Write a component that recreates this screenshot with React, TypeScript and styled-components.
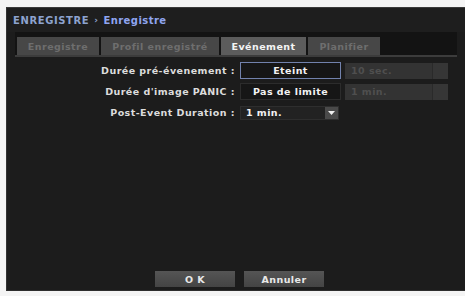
import { FC } from 'react'
import styled, { createGlobalStyle } from 'styled-components'

const GlobalStyle = createGlobalStyle`
  html, body {
    margin: 0;
    padding: 0;
    background: #f4f4f4;
  }
`

interface TabProps {
  active?: boolean
  width: number
}

interface FieldProps {
  focused?: boolean
}

const tabs = [
  { label: 'Enregistre', width: 82 },
  { label: 'Profil enregistré', width: 118 },
  { label: 'Evénement', width: 85, active: true },
  { label: 'Planifier', width: 72 },
]

const ArrowIcon: FC = () => (
  <svg width="7" height="4" viewBox="0 0 7 4">
    <path d="M0 0 L7 0 L3.5 4 Z" fill="#f0f0f0" />
  </svg>
)

const App: FC = () => {
  return (
    <Page>
      <GlobalStyle />
      <Panel>
        <TitleBar>
          <Crumb>ENREGISTRE</Crumb>
          <Sep>›</Sep>
          <Current>Enregistre</Current>
        </TitleBar>
        <TabStrip>
          {tabs.map(t => (
            <Tab key={t.label} active={t.active} width={t.width}>
              {t.label}
            </Tab>
          ))}
        </TabStrip>
        <Content>
          <Row>
            <Label>Durée pré-évenement :</Label>
            <Field focused>Eteint</Field>
            <Disabled>
              <span>10 sec.</span>
              <Stub />
            </Disabled>
          </Row>
          <Row>
            <Label>Durée d'image PANIC :</Label>
            <Field>Pas de limite</Field>
            <Disabled>
              <span>1 min.</span>
              <Stub />
            </Disabled>
          </Row>
          <Row>
            <Label>Post-Event Duration :</Label>
            <Select>
              <span>1 min.</span>
              <ArrowBox>
                <ArrowIcon />
              </ArrowBox>
            </Select>
          </Row>
        </Content>
        <Footer>
          <Button>O K</Button>
          <Button>Annuler</Button>
        </Footer>
      </Panel>
    </Page>
  )
}

const Page = styled.div`
  width: 465px;
  height: 296px;
  box-sizing: border-box;
  padding: 7px 0 5px 6px;
  font-family: 'DejaVu Sans', Verdana, sans-serif;
  font-weight: bold;
  font-size: 10px;
  letter-spacing: 0.45px;
`

const Panel = styled.div`
  height: 100%;
  display: flex;
  flex-direction: column;
  background: #1c1c1c;
  border-top: 1px solid #3a3a3a;
  border-left: 1px solid #333;
  box-sizing: border-box;
`

const TitleBar = styled.div`
  height: 24px;
  display: flex;
  align-items: center;
  padding-left: 6px;
  gap: 5px;
  background: #1e1e1e;
`

const Crumb = styled.span`
  color: #8da3cf;
  font-size: 10px;
  letter-spacing: 0.6px;
`

const Sep = styled.span`
  color: #8da3cf;
  font-size: 9px;
`

const Current = styled.span`
  color: #8fa5f0;
  font-size: 10px;
`

const TabStrip = styled.div`
  margin: 0 8px 0 8px;
  height: 25px;
  box-sizing: border-box;
  padding: 5px 0 0 2px;
  display: flex;
  gap: 2px;
  background: #131313;
  border-bottom: 2px solid #3c3c3c;
`

const Tab = styled.div<TabProps>`
  width: ${props => props.width}px;
  height: 18px;
  display: flex;
  align-items: center;
  justify-content: center;
  background: ${props => (props.active ? '#5c5c5c' : '#474747')};
  color: ${props => (props.active ? '#f4f4f4' : '#6e6e6e')};
  font-size: 9.5px;
`

const Content = styled.div`
  flex: 1;
  display: flex;
  flex-direction: column;
  gap: 4px;
  padding-top: 5px;
`

const Row = styled.div`
  display: flex;
  align-items: center;
  height: 17px;
  gap: 5px;
`

const Label = styled.div`
  width: 228px;
  text-align: right;
  color: #dcdcdc;
  font-size: 9.5px;
  white-space: nowrap;
`

const Field = styled.div<FieldProps>`
  width: 101px;
  height: 17px;
  box-sizing: border-box;
  display: flex;
  align-items: center;
  justify-content: center;
  background: #161616;
  border: 1px solid ${props => (props.focused ? '#7282ad' : '#2c2c2c')};
  color: #f2f2f2;
  font-size: 9.5px;
`

const Disabled = styled.div`
  width: 103px;
  height: 16px;
  display: flex;
  align-items: center;
  justify-content: space-between;
  margin-left: -1px;
  padding-left: 6px;
  box-sizing: border-box;
  background: #333;
  color: #4f4f4f;
  font-size: 9.5px;
`

const Stub = styled.div`
  width: 15px;
  height: 100%;
  border-left: 1px solid #2a2a2a;
  background: #363636;
`

const Select = styled.div`
  width: 99px;
  height: 14px;
  box-sizing: border-box;
  display: flex;
  align-items: center;
  justify-content: space-between;
  padding-left: 5px;
  background: #222;
  border: 1px solid #2e2e2e;
  color: #f2f2f2;
  font-size: 9.5px;
`

const ArrowBox = styled.div`
  width: 13px;
  height: 100%;
  display: flex;
  align-items: center;
  justify-content: center;
  background: #4a4a4a;
`

const Footer = styled.div`
  display: flex;
  justify-content: center;
  gap: 9px;
  padding: 0 0 3px 7px;
  border-bottom: 1px solid #2e2e2e;
`

const Button = styled.div`
  width: 80px;
  height: 16px;
  display: flex;
  align-items: center;
  justify-content: center;
  background: linear-gradient(#555, #444);
  color: #e8e8e8;
  font-size: 9.5px;
`

export default App
